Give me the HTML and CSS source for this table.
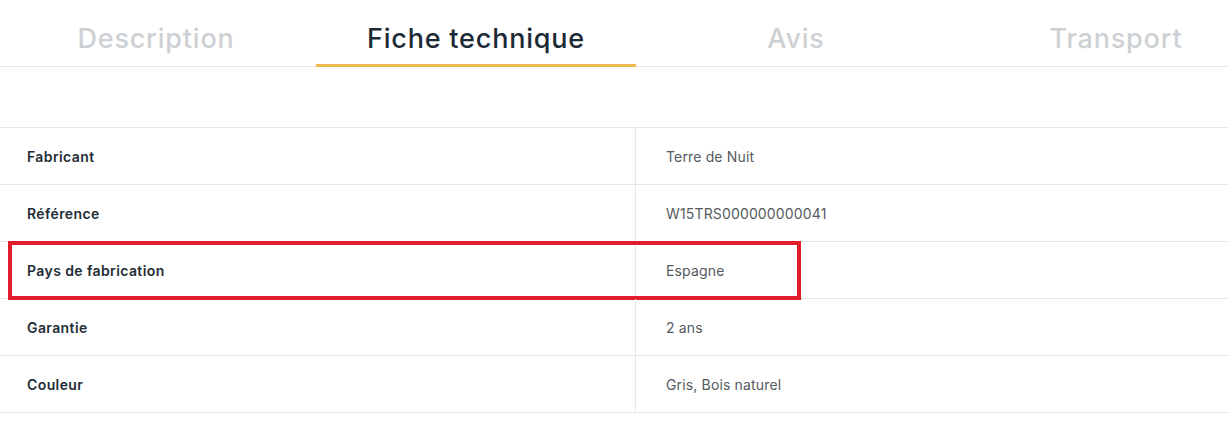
FILE: index.html
```html
<!DOCTYPE html>
<html lang="fr">
<head>
<meta charset="utf-8">
<title>Fiche technique</title>
<link rel="stylesheet" href="styles.css">
</head>
<body>
<nav class="tabs">
  <div class="tab">Description</div>
  <div class="tab active">Fiche technique</div>
  <div class="tab">Avis</div>
  <div class="tab">Transport</div>
</nav>
<div class="spacer"></div>
<div class="specs">
  <div class="row"><div class="label">Fabricant</div><div class="value">Terre de Nuit</div></div>
  <div class="row"><div class="label">Référence</div><div class="value">W15TRS000000000041</div></div>
  <div class="row highlighted"><div class="label">Pays de fabrication</div><div class="value">Espagne</div><div class="mark"></div></div>
  <div class="row"><div class="label">Garantie</div><div class="value">2 ans</div></div>
  <div class="row"><div class="label">Couleur</div><div class="value">Gris, Bois naturel</div></div>
</div>
</body>
</html>
```
FILE: styles.css
```css
* { box-sizing: border-box; }
html, body { margin: 0; padding: 0; background: #fff; }
body { font-family: Inter, "Open Sans", "Liberation Sans", sans-serif; overflow: hidden; }

.tabs {
  display: flex;
  height: 67px;
  border-bottom: 1px solid #e6e6e6;
}
.tabs .tab {
  flex: 0 0 320px;
  display: flex;
  align-items: center;
  justify-content: center;
  padding-top: 10px;
  font-size: 27px;
  font-weight: 500;
  letter-spacing: 0.8px;
  color: #cdd1d4;
}
.tabs .tab:first-child { margin-left: -4px; }
.tabs .tab.active {
  color: #1b2a35;
  border-bottom: 3px solid #ebb94c;
  margin-bottom: -1px;
  padding-top: 12px;
}

.spacer { height: 60px; }

.specs { border-top: 1px solid #e6e6e6; }
.row {
  display: flex;
  height: 57px;
  border-bottom: 1px solid #e6e6e6;
  font-size: 14px;
  position: relative;
}
.label {
  flex: 0 0 635px;
  display: flex;
  align-items: center;
  padding-left: 27px;
  font-weight: 600;
  letter-spacing: 0.4px;
  color: #232d36;
}
.value {
  flex: 1;
  display: flex;
  align-items: center;
  padding-left: 30px;
  border-left: 1px solid #e6e6e6;
  letter-spacing: 0.15px;
  color: #555a5e;
}
.mark {
  position: absolute;
  left: 8px;
  top: -1px;
  width: 793px;
  height: 59px;
  border: 4px solid #e21d2b;
  pointer-events: none;
}
```
